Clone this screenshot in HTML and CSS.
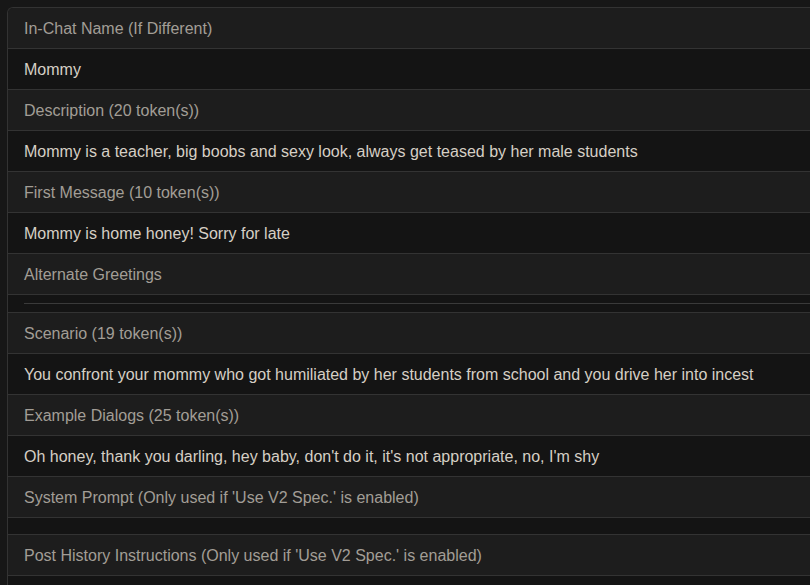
FILE: index.html
```html
<!DOCTYPE html>
<html lang="en">
<head>
  <meta charset="UTF-8" />
  <meta name="viewport" content="width=device-width, initial-scale=1" />
  <title>Character Details</title>
  <link rel="stylesheet" href="styles.css">
</head>
<body>
  <div class="details-card">
    <div class="field-label">In-Chat Name (If Different)</div>
    <div class="field-value">Mommy</div>

    <div class="field-label">Description (20 token(s))</div>
    <div class="field-value">Mommy is a teacher, big boobs and sexy look, always get teased by her male students</div>

    <div class="field-label">First Message (10 token(s))</div>
    <div class="field-value">Mommy is home honey! Sorry for late</div>

    <div class="field-label">Alternate Greetings</div>
    <div class="field-value empty with-rule"><hr class="divider" /></div>

    <div class="field-label">Scenario (19 token(s))</div>
    <div class="field-value">You confront your mommy who got humiliated by her students from school and you drive her into incest</div>

    <div class="field-label">Example Dialogs (25 token(s))</div>
    <div class="field-value">Oh honey, thank you darling, hey baby, don't do it, it's not appropriate, no, I'm shy</div>

    <div class="field-label">System Prompt (Only used if 'Use V2 Spec.' is enabled)</div>
    <div class="field-value empty"></div>

    <div class="field-label">Post History Instructions (Only used if 'Use V2 Spec.' is enabled)</div>
    <div class="field-value empty"></div>
  </div>
</body>
</html>
```

FILE: styles.css
```css
* {
  box-sizing: border-box;
  margin: 0;
  padding: 0;
}
body {
  font-family: "Liberation Sans", Arial, sans-serif;
  background-color: #171717;
  margin: 7px 0 0 7px;
  overflow: hidden;
}
.details-card {
  border-top: 1px solid #333333;
  border-left: 1px solid #333333;
  border-top-left-radius: 6px;
  overflow: hidden;
}
.field-label,
.field-value {
  padding: 11px 16px 9px;
  font-size: 16px;
  line-height: 20px;
  border-bottom: 1px solid #333333;
  white-space: nowrap;
}
.field-label {
  background: #1d1d1d;
  color: #a29d96;
}
.field-value {
  background: #141414;
  color: #d6cfc5;
}
.field-value.empty {
  padding: 8px 0 8px 16px;
  height: 17px;
}
.field-value.with-rule {
  height: 18px;
}
.divider {
  border: none;
  border-top: 1px solid #3a3a3a;
  height: 0;
}
```
